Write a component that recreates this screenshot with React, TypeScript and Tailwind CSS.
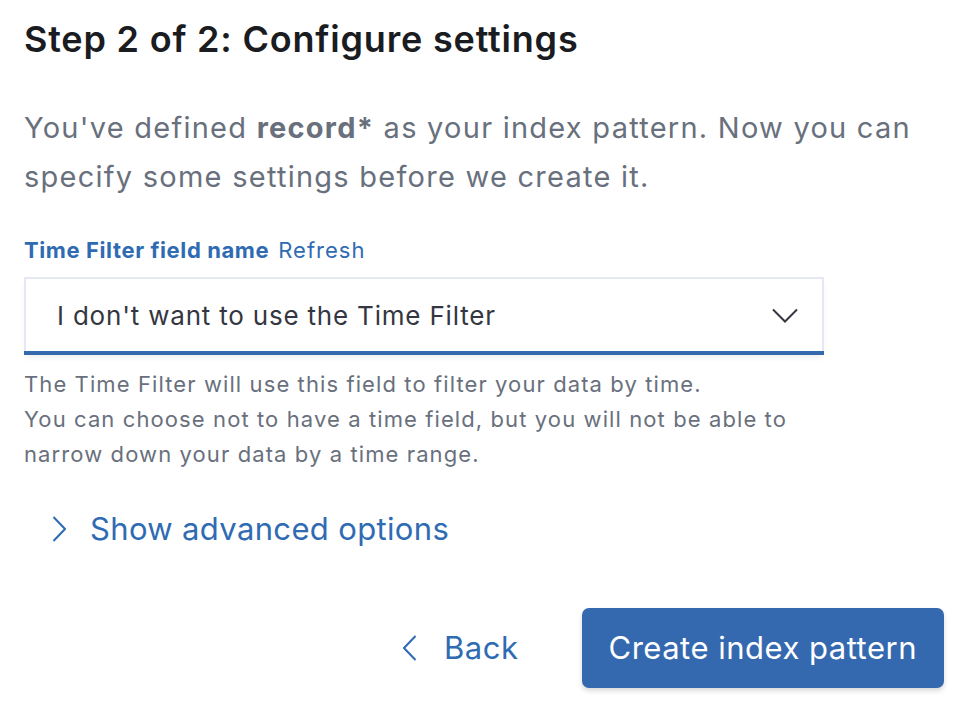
import React from "react";

function ChevronDown() {
  return (
    <svg viewBox="0 0 26 15" className="w-[26px] h-[15px]" fill="none" stroke="#343741" strokeWidth="2">
      <path d="M1 1.5l12 12 12-12" />
    </svg>
  );
}

function ChevronRight() {
  return (
    <svg viewBox="0 0 14 26" className="w-[14px] h-[26px]" fill="none" stroke="currentColor" strokeWidth="2">
      <path d="M1.5 1l11.5 12L1.5 25" />
    </svg>
  );
}

function ChevronLeft() {
  return (
    <svg viewBox="0 0 14 26" className="w-[14px] h-[26px]" fill="none" stroke="currentColor" strokeWidth="2">
      <path d="M12.5 1L1 13l11.5 12" />
    </svg>
  );
}

export default function App() {
  return (
    <div
      className="w-full h-[706px] bg-white px-6 pt-[17px] overflow-hidden"
      style={{ fontFamily: "Inter, 'Noto Sans', sans-serif" }}
    >
      <h2 className="text-[36px] leading-[44px] font-semibold text-[#1a1c21] tracking-[0.8px]">
        Step 2 of 2: Configure settings
      </h2>

      <p className="mt-[42px] w-[900px] text-[29px] leading-[49px] text-[#69707d] tracking-[1.25px]">
        You've defined <strong className="font-bold">record*</strong> as your index pattern. Now you can specify
        some settings before we create it.
      </p>

      {/* Time field */}
      <div className="mt-[35px] w-[800px]">
        <div className="flex items-baseline gap-[9px] text-[22px] leading-[28px] text-[#2f6bb2]">
          <span className="font-bold tracking-[0.6px]">Time Filter field name</span>
          <span className="tracking-[1px]">Refresh</span>
        </div>
        <div className="mt-[13px] h-[78px] bg-white border-2 border-b-0 border-[#e4e8f1] flex flex-col shadow-[0_4px_6px_-2px_rgba(0,0,0,0.08)]">
          <div className="flex-1 flex items-center justify-between pl-[31px] pr-[24px]">
            <span className="text-[26px] text-[#343741] tracking-[0.8px]">I don't want to use the Time Filter</span>
            <ChevronDown />
          </div>
          <div className="h-[4px] bg-[#3469b0] -mx-[2px]" />
        </div>
        <div className="mt-[12px] text-[22px] leading-[35px] text-[#69707d] tracking-[1.1px]">
          <div>The Time Filter will use this field to filter your data by time.</div>
          <div>You can choose not to have a time field, but you will not be able to narrow down your data by a time range.</div>
        </div>
      </div>

      <button className="mt-[37px] ml-[28px] flex items-center gap-[24px] text-[31px] leading-[40px] text-[#2f6bb2] tracking-[0.35px]">
        <ChevronRight />
        <span>Show advanced options</span>
      </button>

      <div className="mt-[59px] flex items-center justify-end">
        <button className="flex items-center gap-[27px] mr-[63px] text-[31px] text-[#2f6bb2] tracking-[0.5px]">
          <ChevronLeft />
          <span>Back</span>
        </button>
        <button className="h-[80px] px-[27px] rounded-[7px] bg-[#3469b0] text-white text-[31px] tracking-[0.5px] shadow-[0_3px_5px_rgba(0,0,0,0.15)]">
          Create index pattern
        </button>
      </div>
    </div>
  );
}
